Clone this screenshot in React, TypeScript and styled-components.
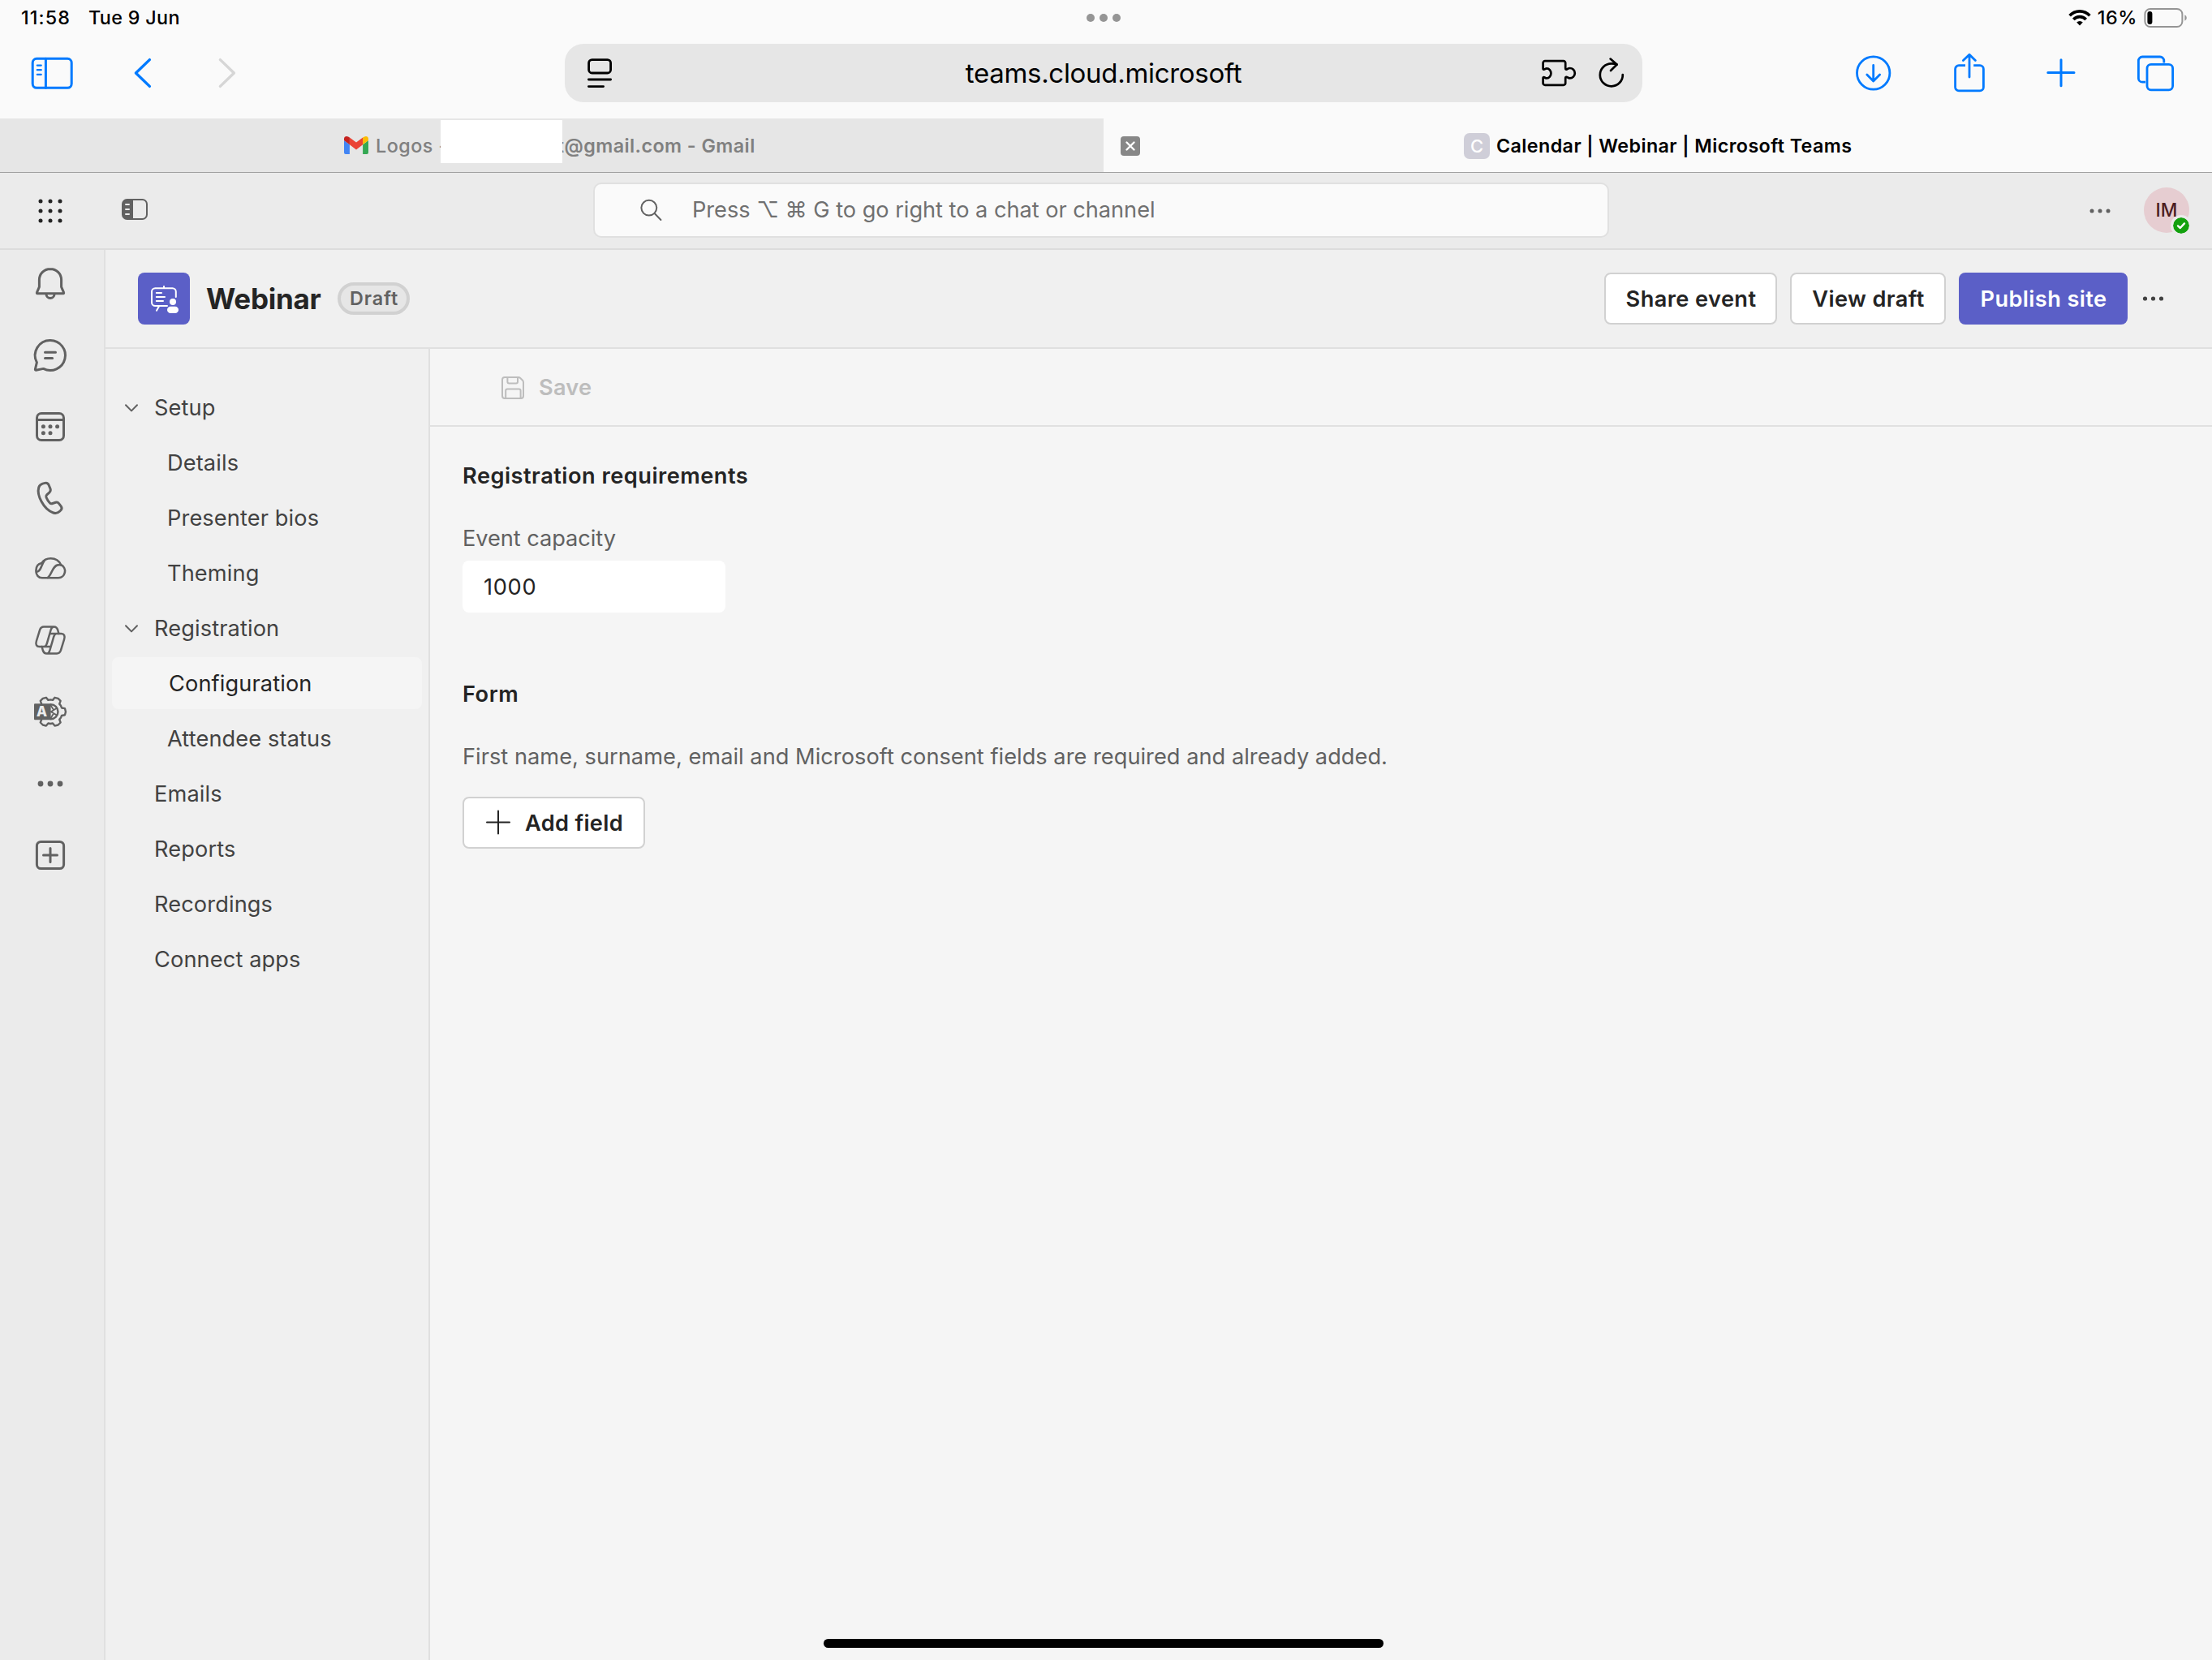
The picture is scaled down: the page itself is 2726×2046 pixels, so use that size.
import React from "react";
import styled, { createGlobalStyle } from "styled-components";

const color = {
  ink: "#242424",
  inkSoft: "#424242",
  inkMuted: "#616161",
  disabled: "#bdbdbd",
  brand: "#5b5fc7",
  ios: "#007aff",
  line: "#e0e0e0",
  chrome: "#fafafa",
  shell: "#ebebeb",
  panel: "#f0f0f0",
  canvas: "#f5f5f5",
};

const Global = createGlobalStyle`
  *, *::before, *::after { box-sizing: border-box; }
  body {
    margin: 0;
    background: ${color.canvas};
    font-family: Inter, "Liberation Sans", sans-serif;
    color: ${color.ink};
  }
  svg { display: block; flex: none; overflow: visible; }
`;

/* ---------- shared ---------- */

const Text = styled.span<{ $size?: number; $weight?: number; $track?: number; $color?: string; $drop?: number }>`
  padding-top: ${(p) => p.$drop ?? 0}px;
  font-size: ${(p) => p.$size ?? 27.2}px;
  font-weight: ${(p) => p.$weight ?? 400};
  letter-spacing: ${(p) => p.$track ?? 0.03}px;
  color: ${(p) => p.$color ?? "inherit"};
  line-height: 40px;
  white-space: pre;
`;

const Icon = styled.svg.attrs({ fill: "none", strokeLinecap: "round", strokeLinejoin: "round" })<{
  $w: number;
  $h: number;
  $color?: string;
  $line?: number;
}>`
  width: ${(p) => p.$w}px;
  height: ${(p) => p.$h}px;
  color: ${(p) => p.$color ?? color.inkMuted};
  stroke: currentColor;
  stroke-width: ${(p) => p.$line ?? 3};
`;

const Screen = styled.div`
  position: relative;
  display: flex;
  flex-direction: column;
  width: 2726px;
  height: 2046px;
  overflow: hidden;
  background: ${color.canvas};
`;

/* ---------- browser chrome ---------- */

const StatusBar = styled.div`
  display: grid;
  grid-template-columns: 1fr auto 1fr;
  align-items: center;
  height: 44px;
  padding: 0 30px 0 26px;
  background: ${color.chrome};
  color: #000;
`;

const StatusSide = styled.div<{ $end?: boolean; $gap: number }>`
  display: flex;
  align-items: center;
  justify-content: ${(p) => (p.$end ? "flex-end" : "flex-start")};
  gap: ${(p) => p.$gap}px;
`;

const Multitask = styled.div`
  display: flex;
  gap: 6px;
  margin-right: 2px;
`;

const MultitaskDot = styled.span`
  width: 10px;
  height: 10px;
  border-radius: 50%;
  background: #959595;
`;

const BrowserBar = styled.div`
  display: grid;
  grid-template-columns: 696px 1328px 1fr;
  align-items: center;
  height: 102px;
  padding-bottom: 10px;
  background: ${color.chrome};
`;

const BarGroup = styled.div<{ $gap: number; $left: number }>`
  display: flex;
  align-items: center;
  gap: ${(p) => p.$gap}px;
  padding-left: ${(p) => p.$left}px;
`;

const AddressBar = styled.div`
  display: grid;
  grid-template-columns: 1fr auto 1fr;
  align-items: center;
  height: 72px;
  padding: 0 21px 0 28px;
  border-radius: 23px;
  background: #e6e6e6;
  color: #000;
`;

const AddressText = styled(Text)`
  margin-right: 7px;
`;

const AddressActions = styled.div`
  display: flex;
  align-items: center;
  justify-content: flex-end;
  gap: 26px;
`;

const TabStrip = styled.div`
  display: grid;
  grid-template-columns: 1360px 1fr;
  height: 67px;
  border-bottom: 1px solid #a0a0a0;
`;

const Tab = styled.div<{ $active?: boolean }>`
  display: flex;
  align-items: center;
  padding-left: ${(p) => (p.$active ? 21 : 424)}px;
  background: ${(p) => (p.$active ? color.chrome : "#e6e6e6")};
  color: ${(p) => (p.$active ? "#000" : "#808080")};
`;

const TabLabel = styled(Text)<{ $left?: number }>`
  margin-left: ${(p) => p.$left ?? 0}px;
`;

const Redaction = styled.span`
  z-index: 1;
  flex: none;
  width: 150px;
  height: 53px;
  margin: 0 -6px 9px -9px;
  background: #fff;
`;

const CloseTab = styled.span`
  display: flex;
  align-items: center;
  justify-content: center;
  width: 24px;
  height: 24px;
  margin-top: 2px;
  border-radius: 4px;
  background: #878787;
`;

const SiteBadge = styled.span`
  display: flex;
  align-items: center;
  justify-content: center;
  width: 32px;
  height: 32px;
  margin: 2px 8px 0 399px;
  border-radius: 7px;
  background: #cfced8;
`;

/* ---------- Teams shell ---------- */

const TopBar = styled.header`
  display: grid;
  grid-template-columns: 731px 1252px 1fr;
  align-items: center;
  height: 95px;
  border-bottom: 2px solid #dcdcdc;
  background: ${color.shell};
`;

const TopLeft = styled.div`
  display: flex;
  align-items: center;
  gap: 73px;
  padding-left: 47px;
`;

const PaneToggle = styled.span`
  display: flex;
  padding-bottom: 4px;
`;

const SearchBox = styled.div`
  display: flex;
  align-items: center;
  gap: 37px;
  height: 68px;
  margin-bottom: 2px;
  padding-left: 56px;
  border: 2px solid ${color.line};
  border-radius: 10px;
  background: ${color.chrome};
`;

const TopRight = styled.div`
  display: flex;
  align-items: center;
  justify-content: flex-end;
  gap: 40px;
  padding-right: 28px;
`;

const Avatar = styled.div`
  position: relative;
  display: flex;
  align-items: center;
  justify-content: center;
  width: 56px;
  height: 56px;
  margin-bottom: 2px;
  border-radius: 50%;
  background: #e6cdd1;
`;

const Presence = styled.span`
  position: absolute;
  right: -3px;
  bottom: -4px;
  display: flex;
  align-items: center;
  justify-content: center;
  width: 26px;
  height: 26px;
  border: 3px solid ${color.shell};
  border-radius: 50%;
  background: #13a10e;
  background-clip: padding-box;
`;

const Body = styled.div`
  display: grid;
  grid-template-columns: 130px 1fr;
  flex: 1;
`;

const Rail = styled.nav`
  display: flex;
  flex-direction: column;
  align-items: center;
  gap: 40px;
  padding: 18px 4px 0 0;
  border-right: 2px solid ${color.line};
  background: ${color.shell};
`;

const Page = styled.div`
  display: flex;
  flex-direction: column;
`;

const EventHeader = styled.div`
  display: flex;
  align-items: center;
  height: 122px;
  padding: 0 57px 0 40px;
  border-bottom: 2px solid ${color.line};
  background: ${color.panel};
`;

const AppTile = styled.div`
  width: 64px;
  height: 64px;
  margin-right: 20px;
  border-radius: 8px;
  background: ${color.brand};
`;

const DraftPill = styled.span`
  display: flex;
  align-items: center;
  justify-content: center;
  width: 89px;
  height: 40px;
  margin: 0 auto 0 20px;
  padding-left: 2px;
  border: 4px solid #d1d1d1;
  border-radius: 20px;
  background: #e6e6e6;
`;

const Button = styled.button<{ $primary?: boolean; $width: number }>`
  display: flex;
  align-items: center;
  justify-content: center;
  gap: 17px;
  width: ${(p) => p.$width}px;
  height: 64px;
  padding: 0 0 0 1px;
  border: 2px solid ${(p) => (p.$primary ? color.brand : "#d1d1d1")};
  border-radius: 8px;
  background: ${(p) => (p.$primary ? color.brand : "#fff")};
  color: ${(p) => (p.$primary ? "#fff" : color.ink)};
  font-family: inherit;
`;

const HeaderActions = styled.div`
  display: flex;
  align-items: center;
  gap: 16px;
`;

const Columns = styled.div`
  display: grid;
  grid-template-columns: 400px 1fr;
  flex: 1;
`;

const SideNav = styled.nav`
  display: flex;
  flex-direction: column;
  gap: 4px;
  padding: 40px 8px 0;
  border-right: 2px solid ${color.line};
  background: ${color.panel};
`;

const NavItem = styled.div<{ $child?: boolean; $selected?: boolean }>`
  display: grid;
  grid-template-columns: 16px 1fr;
  column-gap: ${(p) => (p.$selected ? 38 : p.$child ? 36 : 20)}px;
  align-items: center;
  height: 64px;
  padding: 2px 0 0 16px;
  border-radius: 8px;
  background: ${(p) => (p.$selected ? color.canvas : "transparent")};
  color: ${(p) => (p.$selected ? color.ink : color.inkSoft)};
`;

const NavText = styled(Text)`
  grid-column: 2;
`;

const Main = styled.main`
  display: flex;
  flex-direction: column;
  background: ${color.canvas};
`;

const CommandBar = styled.div`
  display: flex;
  align-items: center;
  gap: 16px;
  height: 96px;
  padding: 2px 0 0 86px;
  border-bottom: 2px solid ${color.line};
`;

const Form = styled.section`
  display: flex;
  flex-direction: column;
  align-items: flex-start;
  padding: 41px 0 0 40px;
`;

const FormBlock = styled.div<{ $top?: number; $after: number }>`
  display: flex;
  flex-direction: column;
  align-items: flex-start;
  gap: 37px;
  margin: ${(p) => p.$top ?? 0}px 0 ${(p) => p.$after}px;
`;

const CapacityInput = styled.div`
  display: flex;
  align-items: center;
  width: 324px;
  height: 64px;
  padding-left: 26px;
  border-radius: 8px;
  background: #fff;
`;

const HomeIndicator = styled.div`
  position: absolute;
  left: 1015px;
  bottom: 15px;
  width: 690px;
  height: 11px;
  border-radius: 6px;
  background: #000;
`;

/* ---------- icons ---------- */

const Dots = ({ w, step, r, tint }: { w: number; step: number; r: number; tint: string }) => (
  <Icon $w={w} $h={20} $color={tint} $line={0} viewBox={`0 0 ${w} 20`}>
    {[-1, 0, 1].map((i) => (
      <circle key={i} cx={w / 2 + i * step} cy={10} r={r} fill="currentColor" />
    ))}
  </Icon>
);

const cog = (cx: number, cy: number) => {
  const profile: [number, number][] = [
    [-30, 14.8], [-19, 14.6], [-13, 18.2], [0, 18.8], [13, 18.2], [19, 14.6],
  ];
  const points: string[] = [];
  for (let tooth = 0; tooth < 6; tooth++) {
    for (const [offset, radius] of profile) {
      const a = ((tooth * 60 + offset) * Math.PI) / 180;
      points.push(`${(cx + radius * Math.cos(a)).toFixed(2)} ${(cy + radius * Math.sin(a)).toFixed(2)}`);
    }
  }
  return `M${points.join("L")}Z`;
};

const BellIcon = () => (
  <Icon $w={48} $h={48} viewBox="0 0 48 48">
    <path d="M24 5.4C16.4 5.4 10.4 11.4 10.4 19V27.6L7.4 34.7a.7.7 0 0 0 .6 1H40a.7.7 0 0 0 .6-1L37.6 27.6V19C37.6 11.4 31.6 5.4 24 5.4Z" />
    <path d="M19 36.5a5 5 0 0 0 10 0" />
  </Icon>
);

const ChatIcon = () => (
  <Icon $w={48} $h={48} viewBox="0 0 48 48">
    <path d="M24 5.5a18.5 18.5 0 1 1-8.6 34.9L6.4 42.2a.9.9 0 0 1-1-1.1l2-8.4A18.5 18.5 0 0 1 24 5.5Z" />
    <path d="M17.5 20.3H30.5M17.5 27.4H26.6" />
  </Icon>
);

const CalendarIcon = () => (
  <Icon $w={48} $h={48} viewBox="0 0 48 48">
    <rect x="7.5" y="7.5" width="33" height="33" rx="5.5" />
    <path d="M7.5 15.4H40.5" />
    <g fill="currentColor" stroke="none">
      {[[15.4, 23.7], [24, 23.7], [32.6, 23.7], [15.4, 31.7], [24, 31.7]].map(([x, y]) => (
        <circle key={`${x}-${y}`} cx={x} cy={y} r="2.5" />
      ))}
    </g>
  </Icon>
);

const PhoneIcon = () => (
  <Icon $w={48} $h={48} viewBox="0 0 48 48">
    <path d="M14.5 6.1L17.5 5.4C19.6 5 21.4 6 22.2 8L24 12.3C24.6 14 24.2 15.6 23 16.8L19.4 20.2C18.6 21 18.5 22 19 23C20 25.5 21.5 28 23.5 30C24.2 30.8 25 31 26 30.7L30.5 29.3C32 28.8 33.6 29.3 34.6 30.6L37.3 34.2C38.3 35.6 38.2 37.5 37 38.8L35.5 40.3C33.4 42.4 30.3 43 27.6 42C22 40 16.5 34.5 13 28C9.5 21.5 8.6 15 9.7 11C10.3 8.7 12.2 6.8 14.5 6.1Z" />
  </Icon>
);

const CloudIcon = () => (
  <Icon $w={48} $h={48} $line={2.6} viewBox="0 0 48 48">
    <path d="M13.8 34.3H34a8.4 8.4 0 0 0 3.2-16C34.9 13.3 30.2 10.3 24.5 10.3C19.5 10.3 15.8 12.4 13.4 16C9.2 16.8 6.4 20.4 6.4 25.4C6.4 30.6 9.4 34.3 13.8 34.3Z" />
    <path d="M20.8 34C26.2 30 26.4 19.6 33.2 18.4C34.6 18.1 36 18 37.2 18.4" />
    <path d="M7 27C12.6 26.4 12.6 18.2 16.6 13.2" />
  </Icon>
);

const copilotHalf =
  "M28.5 6.5H16C13.4 6.5 11.9 8 11.1 10.3L6.9 24C5.6 28.3 7 31 10.5 31H24M17 31C18.6 30.4 19.3 29 19.8 27.2L24.6 10.5C25.3 8 26.6 6.5 28.5 6.5C31 6.5 32.4 8 33.2 10.5L34.4 15";

const CopilotIcon = () => (
  <Icon $w={48} $h={48} $line={2.5} viewBox="0 0 48 48">
    <path d={copilotHalf} />
    <path d={copilotHalf} transform="rotate(180 24 23)" />
  </Icon>
);

const AutomationIcon = () => (
  <Icon $w={48} $h={48} $line={2.4} viewBox="0 0 48 48">
    <path d={cog(24.2, 23.2)} />
    <path d="M24.5 14.2A9 9 0 0 1 24.5 32.2" />
    <path d="M32 18.8L24.8 23.2L32 27.6M24.6 15.5L28 20.8M24.6 31L28 25.6" strokeWidth="1.8" />
    <rect x="4" y="13.2" width="20.6" height="20" rx="1" fill="currentColor" stroke="none" />
    <text x="13.6" y="29.4" fontSize="17" fontWeight="800" textAnchor="middle" fill="#ebebeb" stroke="none">
      A
    </text>
  </Icon>
);

const AddAppIcon = () => (
  <Icon $w={48} $h={48} viewBox="0 0 48 48">
    <rect x="7.4" y="7.4" width="33.2" height="33.2" rx="5" />
    <path d="M24 15.5V32.5M15.5 24H32.5" />
  </Icon>
);

const WebinarIcon = () => (
  <Icon $w={64} $h={64} $color="#fff" $line={2} viewBox="0 0 64 64">
    <path d="M46.8 30V23.5a4.3 4.3 0 0 0-4.3-4.3H21.3a4.3 4.3 0 0 0-4.3 4.3V36.8a4.3 4.3 0 0 0 4.3 4.3H36M32 19V17M26 41.5L23 46.8" />
    <path d="M22.8 25H29M22.8 30H33M22.8 35H31" />
    <g fill="currentColor" stroke="none">
      <circle cx="43" cy="36" r="4" />
      <rect x="36" y="41.7" width="14" height="8.4" rx="4.2" />
    </g>
  </Icon>
);

const WifiIcon = () => (
  <Icon $w={28} $h={20} $color="#000" $line={3.6} viewBox="0 0 28 20">
    <g strokeLinecap="butt">
      <path d="M1.6 7.3A16.8 16.8 0 0 1 26.4 7.3M6.3 12A10.4 10.4 0 0 1 21.7 12" />
    </g>
    <path d="M10.2 15.6A5.4 5.4 0 0 1 17.8 15.6L14 19.6Z" fill="currentColor" stroke="none" />
  </Icon>
);

const BatteryIcon = () => (
  <Icon $w={54} $h={24} $color="#959595" $line={2} viewBox="0 0 54 24">
    <rect x="1.4" y="1" width="46" height="22" rx="6.5" />
    <rect x="4.4" y="4" width="6" height="16" rx="3" fill="#000" stroke="none" />
    <path d="M50.4 8.2A4.2 4.2 0 0 1 50.4 15.8Z" fill="currentColor" stroke="none" />
  </Icon>
);

const SidebarIcon = () => (
  <Icon $w={51} $h={38} $color={color.ios} viewBox="0 0 51 38">
    <rect x="1.2" y="1.3" width="48" height="36" rx="5" />
    <path d="M17.4 1.3V37.3" />
    <path d="M6.8 9.6h5M6.8 15.2h5M6.8 20.8h5" strokeWidth="2.2" />
  </Icon>
);

const ReaderIcon = () => (
  <Icon $w={30} $h={36} $color="#000" $line={2.8} viewBox="0 0 30 36">
    <rect x="1.6" y="1.6" width="27" height="16.4" rx="4" />
    <path d="M1.4 26H28.6M1.4 34.6H19.6" />
  </Icon>
);

const ExtensionIcon = () => (
  <Icon $w={44} $h={36} $color="#000" $line={2.7} viewBox="0 0 44 36">
    <path d="M5 3.2H27.8a2.4 2.4 0 0 1 2.4 2.4V12c0 1 .5 1.6 1.2 1.6 1.2 0 1.9-1.6 4.2-1.6a6.2 6.2 0 0 1 0 12.4c-2.3 0-3-1.6-4.2-1.6-.7 0-1.2.6-1.2 1.6V30.4a2.4 2.4 0 0 1-2.4 2.4H5A2.4 2.4 0 0 1 2.6 30.4V24.6c0-1 .4-1.4 1-1.4 1.2 0 1.8 1.2 3.6 1.2 2.8 0 5.2-2.6 5.2-6s-2.4-6-5.2-6c-1.8 0-2.4 1.2-3.6 1.2-.6 0-1-.4-1-1.4V5.6A2.4 2.4 0 0 1 5 3.2Z" />
  </Icon>
);

const ReloadIcon = () => (
  <Icon $w={34} $h={40} $color="#000" $line={2.7} viewBox="0 0 34 40">
    <path d="M30.8 22A14 14 0 1 1 16.8 8.3c2.6 0 4.9.3 6.8 1.1" />
    <path d="M15.6 2.6L23.6 9.5L16 17" />
  </Icon>
);

const DownloadIcon = () => (
  <Icon $w={46} $h={46} $color={color.ios} $line={2.8} viewBox="0 0 46 46">
    <circle cx="22.7" cy="23" r="20.2" />
    <path d="M22.7 13.4V32.6M14.8 25L22.7 33L30.6 25" />
  </Icon>
);

const ShareIcon = () => (
  <Icon $w={40} $h={50} $color={color.ios} $line={2.8} viewBox="0 0 40 50">
    <g strokeLinecap="butt">
      <path d="M15 15.6H7a4.4 4.4 0 0 0-4.4 4.4V42.4A4.4 4.4 0 0 0 7 46.8H33a4.4 4.4 0 0 0 4.4-4.4V20A4.4 4.4 0 0 0 33 15.6H25.2" />
    </g>
    <path d="M20 2.4V30M12.4 9.6L20 2.2L27.4 9.6" />
  </Icon>
);

const NewTabIcon = () => (
  <Icon $w={36} $h={36} $color={color.ios} viewBox="0 0 36 36">
    <path d="M18 1.8V33.8M1.8 17.6H34" />
  </Icon>
);

const TabsIcon = () => (
  <Icon $w={46} $h={46} $color={color.ios} $line={2.8} viewBox="0 0 46 46">
    <g strokeLinecap="butt">
      <path d="M33.8 10.4V7.8A4.8 4.8 0 0 0 29 3H7.2A4.8 4.8 0 0 0 2.4 7.8V29.4A4.8 4.8 0 0 0 7.2 34.2H11" />
    </g>
    <rect x="13" y="12.4" width="31.6" height="31.4" rx="4.8" />
  </Icon>
);

const GmailIcon = () => (
  <Icon $w={30} $h={22} $line={0} viewBox="0 0 30 22">
    <path d="M2 22H6.9V10.3L0 5.1V20a2 2 0 0 0 2 2Z" fill="#4285f4" />
    <path d="M23.1 22H28a2 2 0 0 0 2-2V5.1l-6.9 5.2Z" fill="#34a853" />
    <path d="M23.1 1.4V10.3L30 5.1V3c0-2.6-2.9-4-4.9-2.5Z" fill="#fbbc04" />
    <path d="M6.9 10.3V1.4L15 7.5L23.1 1.4V10.3L15 16.4Z" fill="#ea4335" />
    <path d="M0 3V5.1l6.9 5.2V1.4L5.1.5C2.9-1 0 .4 0 3Z" fill="#c5221f" />
  </Icon>
);

const WaffleIcon = () => (
  <Icon $w={30} $h={30} $color={color.ink} $line={0} viewBox="0 0 30 30">
    {[3, 15, 27].flatMap((y) =>
      [3, 15, 27].map((x) => <circle key={`${x}-${y}`} cx={x} cy={y} r="2.5" fill="currentColor" />)
    )}
  </Icon>
);

const PaneIcon = () => (
  <Icon $w={32} $h={26} $line={2} viewBox="0 0 32 26">
    <rect x="1" y="1" width="30" height="24" rx="5.5" />
    <path d="M14 1V25H6.5A5.5 5.5 0 0 1 1 19.5V6.5A5.5 5.5 0 0 1 6.5 1Z" fill="currentColor" stroke="none" />
    <path d="M5 7H9M5 13H9M5 19H9" stroke="#ebebeb" />
  </Icon>
);

const SearchIcon = () => (
  <Icon $w={27} $h={27} $line={2} viewBox="0 0 27 27">
    <circle cx="10.8" cy="11.2" r="9.4" />
    <path d="M17.6 18L25.4 26" />
  </Icon>
);

const ChevronIcon = () => (
  <Icon $w={16} $h={10} $line={2} viewBox="0 0 16 10">
    <path d="M1 1.2L8 8.4L15 1.2" />
  </Icon>
);

const SaveIcon = () => (
  <Icon $w={32} $h={32} $color={color.disabled} $line={2} viewBox="0 0 32 32">
    <path d="M6 3H22.8a3.4 3.4 0 0 1 2.4 1l2.8 2.8a3.4 3.4 0 0 1 1 2.4V26a3 3 0 0 1-3 3H6a3 3 0 0 1-3-3V6a3 3 0 0 1 3-3Z" />
    <path d="M9.4 3V8.6a2 2 0 0 0 2 2H20a2 2 0 0 0 2-2V3M7.2 29V19.4a2 2 0 0 1 2-2H23.6a2 2 0 0 1 2 2V29" />
  </Icon>
);

const AddIcon = () => (
  <Icon $w={32} $h={32} $color={color.ink} $line={2} viewBox="0 0 32 32">
    <path d="M16 1.5V29.5M2 15.5H30" />
  </Icon>
);

/* ---------- page ---------- */

type NavEntry = { label: string; group?: boolean; child?: boolean; selected?: boolean };

const navEntries: NavEntry[] = [
  { label: "Setup", group: true },
  { label: "Details", child: true },
  { label: "Presenter bios", child: true },
  { label: "Theming", child: true },
  { label: "Registration", group: true },
  { label: "Configuration", child: true, selected: true },
  { label: "Attendee status", child: true },
  { label: "Emails" },
  { label: "Reports" },
  { label: "Recordings" },
  { label: "Connect apps" },
];

export default function App() {
  return (
    <Screen>
      <Global />

      <StatusBar>
        <StatusSide $gap={22}>
          <Text $size={23.3} $weight={500} $track={1.1}>11:58</Text>
          <Text $size={23.3} $weight={500} $track={0.35}>Tue 9 Jun</Text>
        </StatusSide>
        <Multitask>
          <MultitaskDot />
          <MultitaskDot />
          <MultitaskDot />
        </Multitask>
        <StatusSide $gap={8} $end>
          <WifiIcon />
          <Text $size={23.3} $weight={500} $track={0.6}>16%</Text>
          <BatteryIcon />
        </StatusSide>
      </StatusBar>

      <BrowserBar>
        <BarGroup $left={39} $gap={75}>
          <SidebarIcon />
          <BarGroup $left={0} $gap={82}>
            <Icon $w={22} $h={38} $color={color.ios} $line={3.4} viewBox="0 0 22 38">
              <path d="M19.4 2.6L2.4 19L19.4 35.4" />
            </Icon>
            <Icon $w={22} $h={38} $color="#d6d6d6" $line={3.4} viewBox="0 0 22 38">
              <path d="M2.4 2.6L19.4 19L2.4 35.4" />
            </Icon>
          </BarGroup>
        </BarGroup>
        <AddressBar>
          <ReaderIcon />
          <AddressText $size={33} $track={-0.3}>teams.cloud.microsoft</AddressText>
          <AddressActions>
            <ExtensionIcon />
            <ReloadIcon />
          </AddressActions>
        </AddressBar>
        <BarGroup $left={262} $gap={75}>
          <DownloadIcon />
          <ShareIcon />
          <NewTabIcon />
          <TabsIcon />
        </BarGroup>
      </BrowserBar>

      <TabStrip>
        <Tab>
          <GmailIcon />
          <TabLabel $size={23.3} $weight={500} $track={0.5} $left={9} $drop={2}>Logos -</TabLabel>
          <Redaction />
          <TabLabel $size={23.3} $weight={600} $track={0.45} $drop={2}>t@gmail.com - Gmail</TabLabel>
        </Tab>
        <Tab $active>
          <CloseTab>
            <Icon $w={12} $h={12} $color="#fff" $line={2.4} viewBox="0 0 12 12">
              <path d="M1.5 1.5L10.5 10.5M10.5 1.5L1.5 10.5" />
            </Icon>
          </CloseTab>
          <SiteBadge>
            <Text $size={22} $weight={500} $color="#fff">C</Text>
          </SiteBadge>
          <TabLabel $size={23.3} $weight={600} $track={0.4} $drop={2}>Calendar | Webinar | Microsoft Teams</TabLabel>
        </Tab>
      </TabStrip>

      <TopBar>
        <TopLeft>
          <WaffleIcon />
          <PaneToggle>
            <PaneIcon />
          </PaneToggle>
        </TopLeft>
        <SearchBox>
          <SearchIcon />
          <Text $track={-0.03} $color="#707070">Press ⌥ ⌘ G to go right to a chat or channel</Text>
        </SearchBox>
        <TopRight>
          <Dots w={28} step={10} r={2.5} tint={color.inkMuted} />
          <Avatar>
            <Text $size={22.6} $weight={500} $track={0.2} $color="#4b1c20">IM</Text>
            <Presence>
              <Icon $w={12} $h={12} $color="#fff" $line={2.4} viewBox="0 0 12 12">
                <path d="M2 6.4L4.8 9L10 3.4" />
              </Icon>
            </Presence>
          </Avatar>
        </TopRight>
      </TopBar>

      <Body>
        <Rail>
          <BellIcon />
          <ChatIcon />
          <CalendarIcon />
          <PhoneIcon />
          <CloudIcon />
          <CopilotIcon />
          <AutomationIcon />
          <Icon $w={48} $h={48} $line={0} viewBox="0 0 48 48">
            {[12, 24, 36].map((x) => (
              <circle key={x} cx={x} cy={24} r="3.4" fill="currentColor" />
            ))}
          </Icon>
          <AddAppIcon />
        </Rail>

        <Page>
          <EventHeader>
            <AppTile>
              <WebinarIcon />
            </AppTile>
            <Text $size={35} $weight={700} $track={-0.25}>Webinar</Text>
            <DraftPill>
              <Text $size={23.3} $weight={600} $track={0.9} $color={color.inkMuted}>Draft</Text>
            </DraftPill>
            <HeaderActions>
              <Button $width={213}>
                <Text $weight={600} $track={0.4} $drop={2}>Share event</Text>
              </Button>
              <Button $width={192}>
                <Text $weight={600} $track={0.4} $drop={2}>View draft</Text>
              </Button>
              <Button $width={208} $primary>
                <Text $weight={600} $track={0.4} $drop={2}>Publish site</Text>
              </Button>
              <Dots w={31} step={10} r={2.6} tint={color.inkSoft} />
            </HeaderActions>
          </EventHeader>

          <Columns>
            <SideNav>
              {navEntries.map((item) => (
                <NavItem key={item.label} $child={item.child} $selected={item.selected}>
                  {item.group && <ChevronIcon />}
                  <NavText $track={0.12}>{item.label}</NavText>
                </NavItem>
              ))}
            </SideNav>

            <Main>
              <CommandBar>
                <SaveIcon />
                <Text $weight={600} $track={0.2} $color={color.disabled}>Save</Text>
              </CommandBar>
              <Form>
                <FormBlock $after={7}>
                  <Text $weight={600} $track={0.5}>Registration requirements</Text>
                  <Text $track={-0.05} $color={color.inkMuted}>Event capacity</Text>
                </FormBlock>
                <CapacityInput>
                  <Text $track={0.7} $drop={2}>1000</Text>
                </CapacityInput>
                <FormBlock $top={81} $after={29}>
                  <Text $weight={600} $track={0.5}>Form</Text>
                  <Text $color={color.inkMuted}>
                    First name, surname, email and Microsoft consent fields are required and already added.
                  </Text>
                </FormBlock>
                <Button $width={225}>
                  <AddIcon />
                  <Text $weight={600} $track={0.3} $drop={2}>Add field</Text>
                </Button>
              </Form>
            </Main>
          </Columns>
        </Page>
      </Body>

      <HomeIndicator />
    </Screen>
  );
}
